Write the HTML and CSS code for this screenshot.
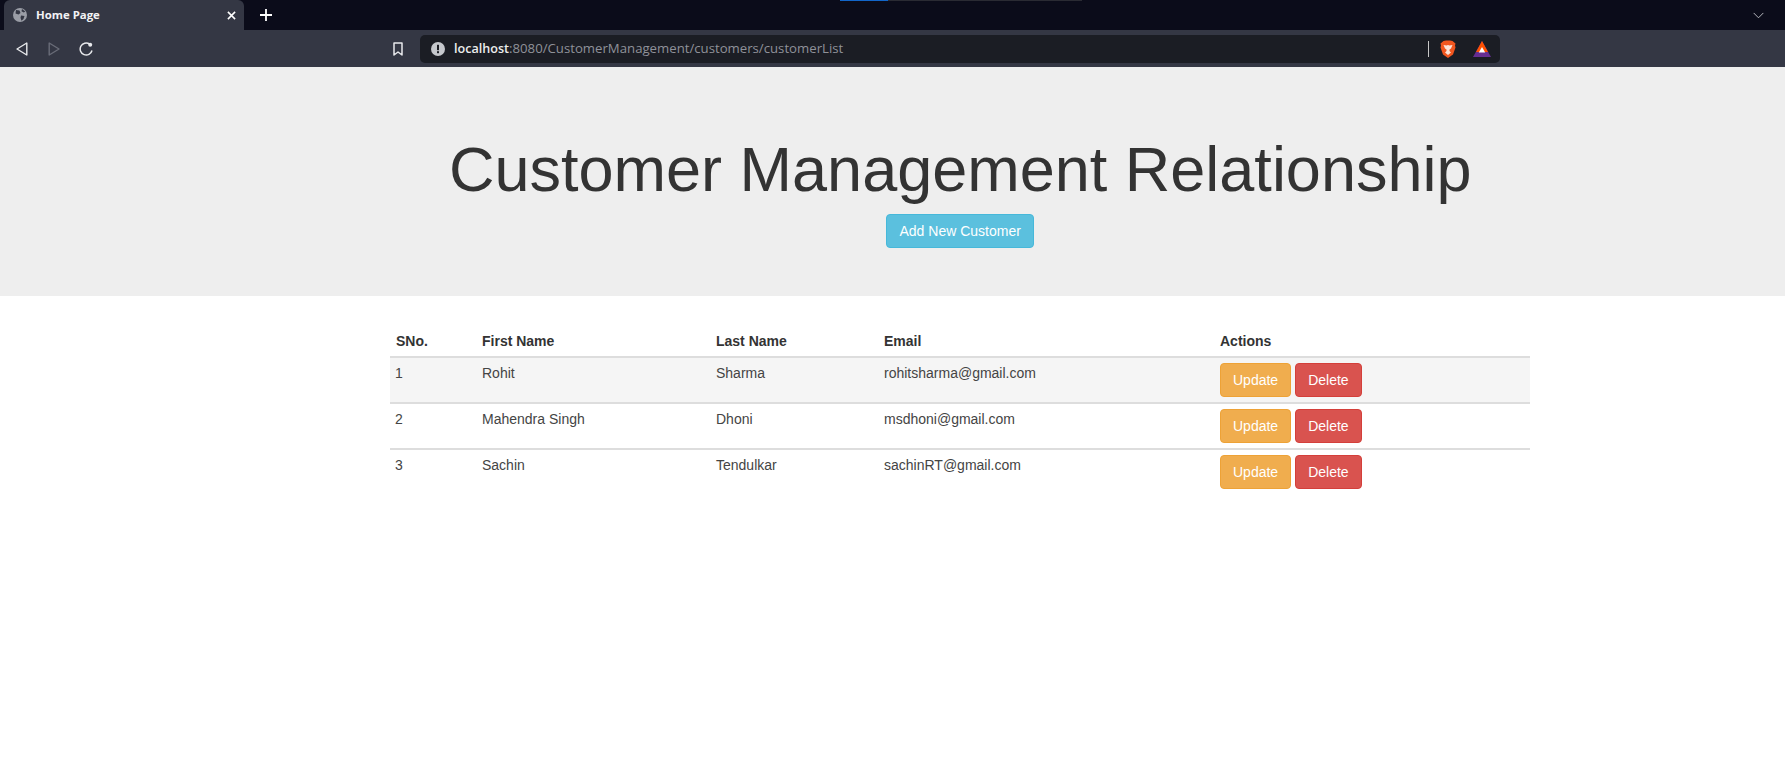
FILE: index.html
```html
<!DOCTYPE html>
<html lang="en">
<head>
<meta charset="utf-8">
<title>Home Page</title>
<link rel="stylesheet" href="styles.css">
</head>
<body>
<div class="tabstrip">
  <div class="tab">
    <svg class="globe" viewBox="0 0 14 14"><circle cx="7" cy="7" r="7" fill="#9a9da6"/><path d="M3 2l3.500.5 1 2.500-2 1.500-3-1zM8 7.500l3.500.5-1 3-2 1.800-1-3zM9 1l3.300 2.500-1.500 1-2.300-1.300z" fill="#343744"/></svg>
    <span class="tab-title">Home Page</span>
    <svg class="tab-close" viewBox="0 0 10 10"><path d="M1 1l8 8M9 1l-8 8" stroke="#fff" stroke-width="1.700" fill="none"/></svg>
  </div>
  <svg class="new-tab" viewBox="0 0 12 12"><path d="M6 0v12M0 6h12" stroke="#fff" stroke-width="1.800" fill="none"/></svg>
  <div class="progress"><span class="progress-fill"></span></div>
  <svg class="chevron" viewBox="0 0 12 7"><path d="M.7.7L6 6l5.300-5.300" stroke="#c4c6cc" stroke-width="1" fill="none"/></svg>
</div>
<div class="toolbar">
  <svg class="nav nav-back" viewBox="0 0 12 14"><path d="M10.800 1v12L1 7z" stroke="#e8e9ec" stroke-width="1.400" fill="none" stroke-linejoin="round"/></svg>
  <svg class="nav nav-forward" viewBox="0 0 12 14"><path d="M1.200 1v12L11 7z" stroke="#696c78" stroke-width="1.400" fill="none" stroke-linejoin="round"/></svg>
  <svg class="nav nav-reload" viewBox="0 0 14 14"><path d="M13 8.500A6 6 0 1 1 10.500 2" stroke="#e8e9ec" stroke-width="1.500" fill="none"/><circle cx="11.200" cy="2.800" r="2" fill="#e8e9ec"/></svg>
  <svg class="bookmark" viewBox="0 0 10 14"><path d="M1 1h8v12L5 10 1 13z" stroke="#e8e9ec" stroke-width="1.500" fill="none" stroke-linejoin="round"/></svg>
  <div class="omnibox">
    <svg class="info" viewBox="0 0 14 14"><circle cx="7" cy="7" r="7" fill="#c5c7cc"/><rect x="6" y="2.800" width="2" height="5.400" fill="#1b1d24"/><rect x="6" y="9.200" width="2" height="2" fill="#1b1d24"/></svg>
    <span class="url"><span class="url-host">localhost</span>:8080/CustomerManagement/customers/customerList</span>
    <span class="omni-sep"></span>
    <svg class="brave" viewBox="0 0 16 18"><path d="M3.500 1L6 .5h4l2.500.5L15.500 3.500l-.5 2 .5 2-2.500 7L8 18l-5-3.500-2.500-7 .5-2-.5-2z" fill="#f1561f"/><path d="M3.500 5l3 .5L8 5l1.500.5 3-.5-1.500 3.500L9.500 9.500v1.500L11 12.500 8 15l-3-2.500L6.500 11V9.500L5 8.500z" fill="#fbe3d8"/></svg>
    <svg class="bat" viewBox="0 0 18 16"><path d="M9 0l9 16H0z" fill="#662d91"/><path d="M9 0l6 11H3z" fill="#ff5000"/><path d="M9 6l3.200 5.500H5.800z" fill="#fff"/></svg>
  </div>
</div>
<header class="jumbotron">
  <h1 class="title">Customer Management Relationship</h1>
  <a class="btn btn-info add-btn">Add New Customer</a>
</header>
<main class="content">
  <table class="customers">
    <thead>
      <tr><th class="c1">SNo.</th><th class="c2">First Name</th><th class="c3">Last Name</th><th class="c4">Email</th><th>Actions</th></tr>
    </thead>
    <tbody>
      <tr class="striped"><td>1</td><td>Rohit</td><td>Sharma</td><td>rohitsharma@gmail.com</td><td><a class="btn btn-warning">Update</a><a class="btn btn-danger">Delete</a></td></tr>
      <tr><td>2</td><td>Mahendra Singh</td><td>Dhoni</td><td>msdhoni@gmail.com</td><td><a class="btn btn-warning">Update</a><a class="btn btn-danger">Delete</a></td></tr>
      <tr><td>3</td><td>Sachin</td><td>Tendulkar</td><td>sachinRT@gmail.com</td><td><a class="btn btn-warning">Update</a><a class="btn btn-danger">Delete</a></td></tr>
    </tbody>
  </table>
</main>
</body>
</html>
```
FILE: styles.css
```css
* { box-sizing: border-box; }
html, body { margin: 0; padding: 0; background: #fff; }
body { font-family: "Liberation Sans", Arial, sans-serif; font-size: 14px; color: #333; line-height: 20px; overflow: hidden; }

.tabstrip { height: 30px; background: #0b0c1a; display: flex; align-items: center; position: relative; padding-left: 4px; }
.tab { width: 240px; height: 30px; background: #343744; border-radius: 6px 6px 0 0; display: flex; align-items: center; padding: 0 7px 0 9px; }
.globe { width: 14px; height: 14px; flex: none; }
.tab-title { font-family: "Open Sans", sans-serif; font-weight: 700; font-size: 11.4px; color: #f2f2f4; margin-left: 9px; flex: 1; }
.tab-close { width: 9px; height: 9px; flex: none; margin-right: 1px; }
.new-tab { width: 12px; height: 12px; margin-left: 16px; }
.progress { position: absolute; left: 840px; top: 0; width: 242px; height: 1px; background: #2a2b33; }
.progress-fill { display: block; width: 48px; height: 1px; background: #1266c9; }
.chevron { width: 11px; height: 7px; margin-left: auto; margin-right: 21px; }

.toolbar { height: 37px; background: #343744; display: flex; align-items: center; padding-left: 16px; }
.nav { height: 14px; flex: none; }
.nav-back { width: 12px; }
.nav-forward { width: 12px; margin-left: 20px; }
.nav-reload { width: 14px; margin-left: 19px; }
.bookmark { width: 10px; height: 14px; margin-left: 300px; flex: none; }
.omnibox { width: 1080px; height: 28px; margin-left: 17px; background: #1b1d24; border-radius: 5px; display: flex; align-items: center; padding-left: 11px; }
.info { width: 14px; height: 14px; flex: none; }
.url { font-family: "Open Sans", sans-serif; font-size: 13.2px; color: #8f9199; margin-left: 9px; width: 974px; white-space: nowrap; }
.url-host { color: #eceded; font-weight: 600; font-size: 12.6px; }
.omni-sep { width: 1px; height: 16px; background: #c8c8c8; flex: none; }
.brave { width: 16px; height: 18px; margin-left: 11px; flex: none; }
.bat { width: 18px; height: 16px; margin-left: 17px; flex: none; }

.jumbotron { height: 229px; background: #eee; display: flex; flex-direction: column; padding: 68px 0 0 449px; }
.title { font-size: 63px; font-weight: 400; line-height: 69px; margin: 0; color: #333; white-space: nowrap; }
.btn { display: inline-block; height: 34px; padding: 6px 12px; border: 1px solid transparent; border-radius: 4px; font-size: 14px; line-height: 20px; color: #fff; }
.add-btn { align-self: flex-start; margin: 10px 0 0 437px; padding: 6px 12.5px; background: #5bc0de; border-color: #46b8da; }
.btn-warning { background: #f0ad4e; border-color: #eea236; }
.btn-danger { background: #d9534f; border-color: #d43f3a; margin-left: 4px; }

.content { padding: 30px 0 0 390px; }
.customers { width: 1140px; border-collapse: collapse; table-layout: fixed; }
.customers th, .customers td { padding: 5px; text-align: left; vertical-align: top; }
.customers th { font-weight: 700; border-bottom: 2px solid #ddd; height: 31px; }
.customers th.c1 { padding-left: 6px; }
.customers td { border-bottom: 2px solid #ddd; height: 46px; color: #444; }
.customers tbody tr:last-child td { border-bottom: 0; }
.c1 { width: 87px; }
.c2 { width: 234px; }
.c3 { width: 168px; }
.c4 { width: 336px; }
.striped { background: #f5f5f5; }
```
